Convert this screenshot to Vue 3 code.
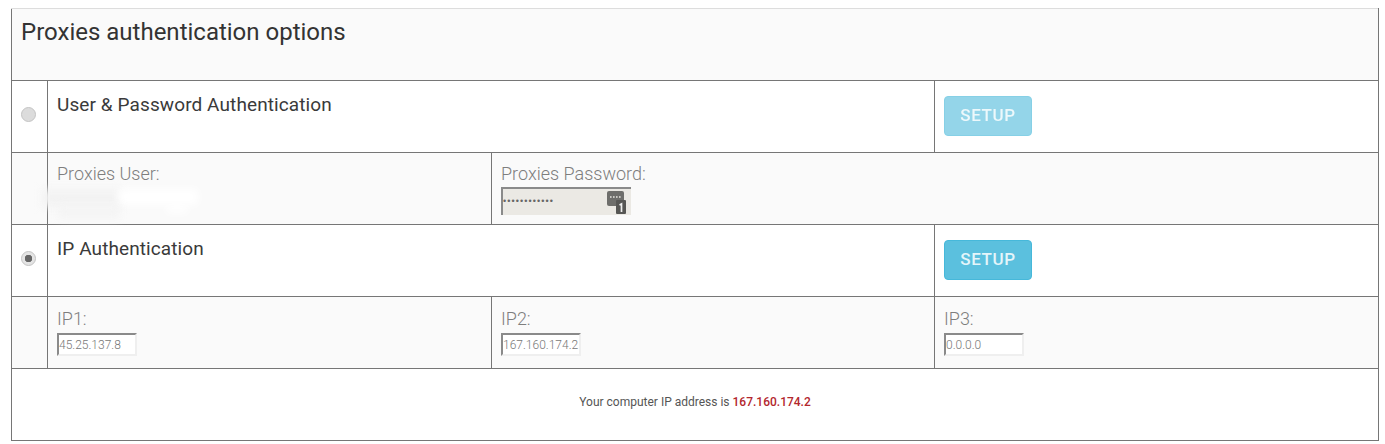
<template>
  <div class="page">
    <table class="options">
      <colgroup>
        <col class="col-radio" />
        <col class="col-a" />
        <col class="col-b" />
        <col />
      </colgroup>
      <tbody>
        <tr class="grey">
          <td colspan="4"><h3>Proxies authentication options</h3></td>
        </tr>
        <tr>
          <td class="radio-cell"><span class="radio"></span></td>
          <td colspan="2"><h4>User &amp; Password Authentication</h4></td>
          <td class="btn-cell"><button class="setup disabled">SETUP</button></td>
        </tr>
        <tr class="grey">
          <td></td>
          <td class="user-cell">
            <label>Proxies User:</label>
            <div class="smudge">
              <span class="s1"></span>
              <span class="s2"></span>
              <span class="s3"></span>
              <span class="s4"></span>
            </div>
          </td>
          <td colspan="2">
            <label>Proxies Password:</label>
            <div class="pass">
              <span class="dots">••••••••••••</span>
              <svg class="key" width="20" height="25" viewBox="0 0 20 25">
                <rect x="0" y="1" width="17" height="15" rx="2" fill="#6e6e6b" />
                <rect x="9" y="10" width="10" height="14" rx="1" fill="#565654" />
                <path d="M3 7h1.6M6 7h1.6M9 7h1.6M12 7h1.6" stroke="#e8e6e1" stroke-width="1.6" />
                <path d="M12.5 15l2-1v8" stroke="#eee" stroke-width="1.7" fill="none" />
              </svg>
            </div>
          </td>
        </tr>
        <tr>
          <td class="radio-cell"><span class="radio on"></span></td>
          <td colspan="2"><h4>IP Authentication</h4></td>
          <td class="btn-cell"><button class="setup">SETUP</button></td>
        </tr>
        <tr class="grey">
          <td></td>
          <td v-for="ip in ips" :key="ip.label">
            <label class="ip-label">{{ ip.label }}</label>
            <input class="ip" type="text" :value="ip.value" />
          </td>
        </tr>
        <tr>
          <td colspan="4" class="foot">
            Your computer IP address is <b>167.160.174.2</b>
          </td>
        </tr>
      </tbody>
    </table>
  </div>
</template>

<script setup>
const ips = [
  { label: 'IP1:', value: '45.25.137.8' },
  { label: 'IP2:', value: '167.160.174.2' },
  { label: 'IP3:', value: '0.0.0.0' }
]
</script>

<style scoped>
.page { padding: 8px 6px 0 11px; background: #fff; height: 436px; font-family: Roboto, "Liberation Sans", sans-serif; overflow: hidden; }
.options { width: 1368px; border-collapse: collapse; table-layout: fixed; color: #333; }
.col-radio { width: 36px; }
.col-a { width: 444px; }
.col-b { width: 443px; }
tr { height: 72px; }
td { border: 1px solid #767676; padding: 8px 9px 0; vertical-align: top; }
tr:first-child td { border-top-color: #ddd; }
.grey td { background: #fafafa; }
h3 { margin: 0; font-size: 24px; font-weight: 400; line-height: 30px; color: #333; }
h4 { margin: 0; font-size: 19px; font-weight: 400; letter-spacing: 0.1px; line-height: 31px; color: #3a3a3a; }
.radio-cell { padding: 0 3px 4px 0; text-align: center; vertical-align: middle; }
.radio { display: block; width: 15px; height: 15px; margin: 0 auto; border-radius: 50%; background: #dcdcdc; border: 1px solid #c4c4c4; box-sizing: border-box; }
.radio.on { background: radial-gradient(circle, #666 0 3.5px, #e4e4e4 4px); }
.btn-cell { padding: 15px 9px 0; }
.setup { display: block; width: 88px; height: 40px; padding: 0 0 2px; border: 1px solid #46b8da; border-radius: 4px; background: #5bc0de; color: #e4f5fa; font-family: inherit; font-size: 17px; font-weight: 500; letter-spacing: 0.6px; }
.setup.disabled { opacity: 0.65; }
label { display: block; font-size: 18px; font-weight: 300; line-height: 26px; color: #7e7e7e; }
.ip-label { padding-top: 1px; }
.user-cell { position: relative; }
.smudge { height: 30px; }
.smudge span { position: absolute; display: block; filter: blur(4px); }
.s1 { left: -6px; top: 36px; width: 80px; height: 18px; background: #f3f3f3; }
.s2 { left: 70px; top: 36px; width: 80px; height: 16px; background: #fff; }
.s3 { left: 11px; top: 52px; width: 60px; height: 14px; background: #f4f4f4; }
.s4 { left: 118px; top: 52px; width: 22px; height: 8px; background: #fff; }
.pass { position: relative; width: 130px; height: 28px; box-sizing: border-box; border-top: 2px solid #8a8a8a; border-left: 2px solid #8a8a8a; background: #ebe9e4; }
.dots { position: absolute; left: 0; top: 4px; font-size: 9px; line-height: 16px; letter-spacing: 1.1px; color: #666; font-family: "Liberation Sans", sans-serif; }
.key { position: absolute; right: 4px; top: 1px; }
.ip { display: block; width: 80px; height: 23px; box-sizing: border-box; margin: 1px 0 0; padding: 0; border: 2px solid #efefef; border-top-color: #8a8a8a; border-left-color: #8a8a8a; background: #fff; font-family: inherit; font-size: 12px; font-weight: 300; color: #777; outline: none; }
.foot { text-align: center; padding-top: 26px; font-size: 12px; color: #555; }
.foot b { color: #b3272d; font-weight: 500; }
</style>
